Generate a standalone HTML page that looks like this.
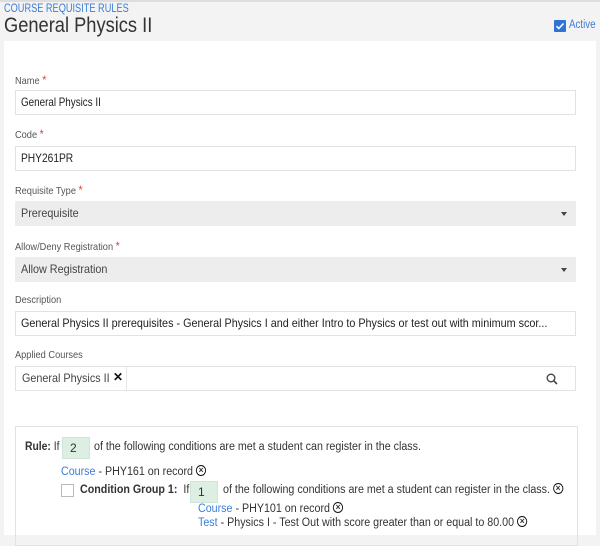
<!DOCTYPE html>
<html><head><meta charset="utf-8"><style>
*{margin:0;padding:0;box-sizing:border-box}
body{width:600px;height:535px;overflow:hidden;background:#f3f3f3;font-family:"Liberation Sans",sans-serif;color:#333;position:relative}
.a{position:absolute;white-space:nowrap}
.s{display:inline-block;transform-origin:0 50%}
.lbl{font-size:10.5px;color:#555}
.req{color:#e0413a;font-size:12px}
.inp{position:absolute;left:15px;width:561px;height:25px;border:1px solid #e2e2e2;background:#fff;font-size:12px;padding:0 0 0 5px;line-height:23px;color:#222;white-space:nowrap;overflow:hidden}
.sel{background:#ededed;border-color:#ededed;color:#444;overflow:visible}
.sel:after{content:"";position:absolute;right:8px;top:10px;border-left:3px solid transparent;border-right:3px solid transparent;border-top:4px solid #444}
.blue{color:#3b7dd8}
.x{display:inline-block;width:11px;height:11px;border:1.4px solid #111;border-radius:50%;font-size:9px;line-height:8px;text-align:center;vertical-align:middle;font-weight:bold;margin-top:-2px}
.t{font-size:11.5px}
.num{position:absolute;background:#dcefe2;border:1px solid #cde6d5;font-size:12px;padding-left:7px;line-height:20px}
</style></head><body>
<div class="a" style="left:0;top:0;width:600px;height:2px;background:#ddd"></div>
<div class="a blue" style="left:4px;top:3px;font-size:11.5px"><span class="s" style="transform:scaleX(.8)">COURSE REQUISITE RULES</span></div>
<div class="a" style="left:4px;top:13px;font-size:21.5px;color:#333"><span class="s" style="transform:scaleX(.85)">General Physics II</span></div>
<div class="a" style="left:554px;top:20px;width:12px;height:12px;background:#2f73d6;border-radius:1px"><svg width="12" height="12" style="display:block"><path d="M2.5 6.2l2.3 2.3 4.7-5" stroke="#fff" stroke-width="1.6" fill="none"/></svg></div>
<div class="a blue" style="left:569px;top:19px;font-size:11.5px"><span class="s" style="transform:scaleX(.85)">Active</span></div>
<div class="a" style="left:4px;top:41px;width:592px;height:494px;background:#fff"></div>

<div class="a lbl" style="left:15px;top:73px"><span class="s" style="transform:scaleX(.88)">Name <span class="req">*</span></span></div>
<div class="inp" style="top:90px"><span class="s" style="transform:scaleX(.82)">General Physics II</span></div>
<div class="a lbl" style="left:15px;top:127px"><span class="s" style="transform:scaleX(.88)">Code <span class="req">*</span></span></div>
<div class="inp" style="top:146px"><span class="s" style="transform:scaleX(.85)">PHY261PR</span></div>
<div class="a lbl" style="left:15px;top:183px"><span class="s" style="transform:scaleX(.88)">Requisite Type <span class="req">*</span></span></div>
<div class="inp sel" style="top:201px"><span class="s" style="transform:scaleX(.9)">Prerequisite</span></div>
<div class="a lbl" style="left:15px;top:239px"><span class="s" style="transform:scaleX(.88)">Allow/Deny Registration <span class="req">*</span></span></div>
<div class="inp sel" style="top:257px"><span class="s" style="transform:scaleX(.9)">Allow Registration</span></div>
<div class="a lbl" style="left:15px;top:294px"><span class="s" style="transform:scaleX(.88)">Description</span></div>
<div class="inp" style="top:311px"><span class="s" style="transform:scaleX(.9)">General Physics II prerequisites - General Physics I and either Intro to Physics or test out with minimum scor...</span></div>
<div class="a lbl" style="left:15px;top:349px"><span class="s" style="transform:scaleX(.88)">Applied Courses</span></div>
<div class="inp" style="top:366px;padding:0"></div>
<div class="a" style="left:16px;top:367px;width:111px;height:24px;background:#fff;border-right:1px solid #e6e6e6;border-bottom:1px solid #e6e6e6;font-size:12px;line-height:23px;padding-left:6px;color:#444"><span class="s" style="transform:scaleX(.9)">General Physics II</span></div>
<div class="a" style="left:113px;top:370px;font-size:12px;font-weight:bold;color:#111">✕</div>
<svg class="a" style="left:546px;top:373px" width="12" height="12"><circle cx="5" cy="5" r="3.8" stroke="#444" stroke-width="1.4" fill="none"/><path d="M8 8l3 3" stroke="#444" stroke-width="1.6"/></svg>

<div class="a" style="left:15px;top:426px;width:563px;height:120px;border:1px solid #e2e2e2"></div>
<div class="a t" style="left:25px;top:441px"><span class="s" style="transform:scaleX(.9)"><b>Rule:</b> If</span></div>
<div class="num" style="left:62px;top:437px;width:28px;height:22px">2</div>
<div class="a t" style="left:94px;top:441px"><span class="s" style="transform:scaleX(.93)">of the following conditions are met a student can register in the class.</span></div>
<div class="a t" style="left:61px;top:466px"><span class="s" style="transform:scaleX(.93)"><span class="blue">Course</span> - PHY161 on record <span class="x">×</span></span></div>
<div class="a" style="left:61px;top:484px;width:13px;height:13px;border:1px solid #bbb"></div>
<div class="a t" style="left:80px;top:484px"><span class="s" style="transform:scaleX(.93)"><b>Condition Group 1:</b>&nbsp; If</span></div>
<div class="num" style="left:190px;top:481px;width:28px;height:22px">1</div>
<div class="a t" style="left:223px;top:484px"><span class="s" style="transform:scaleX(.93)">of the following conditions are met a student can register in the class. <span class="x">×</span></span></div>
<div class="a t" style="left:198px;top:503px"><span class="s" style="transform:scaleX(.93)"><span class="blue">Course</span> - PHY101 on record <span class="x">×</span></span></div>
<div class="a t" style="left:198px;top:517px"><span class="s" style="transform:scaleX(.93)"><span class="blue">Test</span> - Physics I - Test Out with score greater than or equal to 80.00 <span class="x">×</span></span></div>
</body></html>
